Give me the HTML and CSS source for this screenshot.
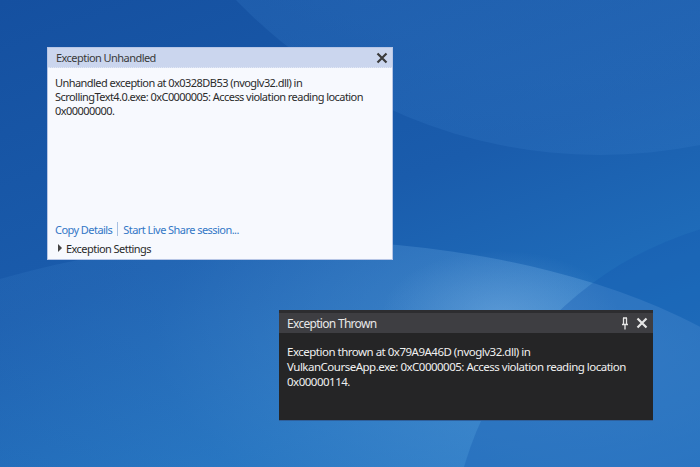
FILE: index.html
```html
<!DOCTYPE html>
<html lang="en">
  <head>
    <meta charset="UTF-8" />
    <meta name="viewport" content="width=device-width, initial-scale=1.0" />
    <title>Exception dialogs</title>
    <link rel="stylesheet" href="styles.css">
  </head>
  <body>
    <div class="desktop">
      <div class="swoosh swoosh-top"></div>
      <div class="swoosh swoosh-band"></div>
      <div class="swoosh swoosh-glow"></div>
      <div class="swoosh swoosh-low"></div>

      <!-- light dialog -->
      <section class="dialog dialog-light">
        <div class="dialog-title">
          <span>Exception Unhandled</span>
          <span class="title-icons">
            <svg class="icon-close" viewBox="0 0 12 12" width="12" height="12">
              <path d="M1.5 1.5 L10.5 10.5 M10.5 1.5 L1.5 10.5" />
            </svg>
          </span>
        </div>
        <div class="dialog-body">
          <p class="message">
            Unhandled exception at 0x0328DB53 (nvoglv32.dll) in<br>
            ScrollingText4.0.exe: 0xC0000005: Access violation reading location<br>
            0x00000000.
          </p>
          <div class="links">
            <a href="#">Copy Details</a>
            <span class="sep"></span>
            <a href="#">Start Live Share session...</a>
          </div>
          <div class="settings">
            <span class="caret"></span>
            Exception Settings
          </div>
        </div>
        <span class="grip"></span>
      </section>

      <!-- dark dialog -->
      <section class="dialog dialog-dark">
        <div class="dark-strip"></div>
        <div class="dialog-title">
          <span>Exception Thrown</span>
          <span class="title-icons">
            <svg class="icon-pin" viewBox="0 0 8 13" width="8" height="13">
              <path d="M2 1 H6 M2.5 1 V7.5 M5.5 1 V7.5 M1 7.5 H7 M4 7.5 V12.5" />
            </svg>
            <svg class="icon-close" viewBox="0 0 12 12" width="12" height="12">
              <path d="M1.5 1.5 L10.5 10.5 M10.5 1.5 L1.5 10.5" />
            </svg>
          </span>
        </div>
        <div class="dialog-body">
          <p class="message">
            Exception thrown at 0x79A9A46D (nvoglv32.dll) in<br>
            VulkanCourseApp.exe: 0xC0000005: Access violation reading location<br>
            0x00000114.
          </p>
        </div>
      </section>
    </div>
  </body>
</html>
```

FILE: styles.css
```css
* {
  margin: 0;
  padding: 0;
  box-sizing: border-box;
}
body {
  width: 700px;
  height: 467px;
  overflow: hidden;
  font-family: "Noto Sans", "Open Sans", sans-serif;
}
.desktop {
  position: relative;
  width: 700px;
  height: 467px;
  overflow: hidden;
  background: linear-gradient(160deg, #1550a0 0%, #1a5cac 45%, #2070bd 75%, #2a7cc6 100%);
}
/* wallpaper curves */
.swoosh {
  position: absolute;
  border-radius: 50%;
}
.swoosh-top {
  left: 95px;
  top: -855px;
  width: 1010px;
  height: 1010px;
  background: radial-gradient(circle at 50% 50%, rgba(60, 130, 205, 0.25) 60%, rgba(50, 120, 200, 0.12) 100%);
}
.swoosh-band {
  left: -260px;
  top: 240px;
  width: 1100px;
  height: 520px;
  background: radial-gradient(ellipse at 75% 20%, rgba(110, 170, 225, 0.45) 0%, rgba(70, 140, 210, 0.22) 35%, rgba(40, 110, 190, 0.12) 70%);
}
.swoosh-glow {
  left: 380px;
  top: 250px;
  width: 240px;
  height: 130px;
  background: radial-gradient(ellipse, rgba(140, 190, 235, 0.35) 0%, rgba(140, 190, 235, 0) 70%);
}
.swoosh-low {
  left: 450px;
  top: 215px;
  width: 700px;
  height: 700px;
  background: rgba(20, 90, 175, 0.35);
}
.dialog {
  position: absolute;
  display: flex;
  flex-direction: column;
}
.dialog-title {
  display: flex;
  justify-content: space-between;
  align-items: center;
  height: 20px;
  padding: 0 4px 0 8px;
  font-size: 11px;
  white-space: nowrap;
}
.title-icons {
  display: flex;
  align-items: center;
  gap: 7px;
}
.icon-close path,
.icon-pin path {
  fill: none;
  stroke-width: 2.2;
}
.message {
  font-size: 11px;
  line-height: 14px;
  white-space: nowrap;
}

/* light dialog */
.dialog-light {
  left: 47px;
  top: 47px;
  width: 346px;
  height: 213px;
  background: #f7f9fe;
  border: 1px solid #b7c6e6;
  letter-spacing: -0.55px;
}
.dialog-light .dialog-title {
  background: #cbd6ee;
  color: #3a3a3a;
  border-bottom: 1px dotted #e2e8f5;
}
.dialog-light .icon-close path {
  stroke: #3b3b3b;
}
.dialog-light .dialog-body {
  flex: 1;
  display: flex;
  flex-direction: column;
  padding: 8px 7px 3px;
  color: #2b2b2b;
}
.dialog-light .message {
  flex: 1;
}
.links {
  display: flex;
  align-items: center;
  gap: 5px;
  font-size: 11px;
  height: 16px;
  white-space: nowrap;
}
.links a {
  color: #3377c6;
  text-decoration: none;
}
.sep {
  width: 1px;
  height: 14px;
  background: #a9c1e2;
}
.settings {
  display: flex;
  align-items: center;
  gap: 4px;
  margin-top: 3px;
  height: 16px;
  padding-left: 3px;
  font-size: 11px;
  color: #2b2b2b;
  white-space: nowrap;
}
.caret {
  width: 0;
  height: 0;
  border-top: 4px solid transparent;
  border-bottom: 4px solid transparent;
  border-left: 4px solid #444;
}
.grip {
  position: absolute;
  right: 1px;
  bottom: 1px;
  width: 5px;
  height: 5px;
  background: radial-gradient(circle, #b8c2d4 40%, transparent 45%) 0 0 / 2px 2px;
}

/* dark dialog */
.dialog-dark {
  left: 279px;
  top: 310px;
  width: 374px;
  height: 111px;
  background: #252526;
  border-bottom: 1px solid #2e5f9c;
  letter-spacing: -0.5px;
}
.dark-strip {
  height: 3px;
  background: #2d2d30;
}
.dialog-dark .dialog-title {
  background: #3e3e42;
  color: #e8e8e8;
  font-size: 12px;
  letter-spacing: -0.7px;
  padding-right: 5px;
}
.dialog-dark .icon-close path,
.dialog-dark .icon-pin path {
  stroke: #e6e6e6;
}
.dialog-dark .icon-pin path {
  stroke-width: 1.3;
}
.dialog-dark .dialog-body {
  padding: 11px 8px 9px;
  color: #f0f0f0;
}
.dialog-dark .message {
  font-size: 11.5px;
  line-height: 15px;
}
```
